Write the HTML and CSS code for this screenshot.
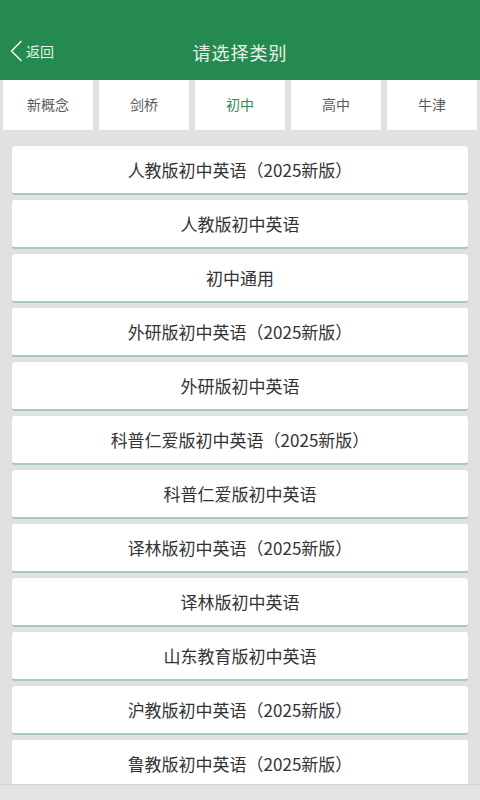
FILE: index.html
```html
<!DOCTYPE html>
<html lang="zh">
<head>
<meta charset="utf-8">
<link rel="stylesheet" href="styles.css">
</head>
<body>
<div class="app">
  <header class="topbar">
    <div class="back">
      <svg class="chev" width="14" height="22" viewBox="0 0 14 22"><path d="M12 1.5 L2.5 11 L12 20.5" fill="none" stroke="#e6f3ea" stroke-width="1.7" stroke-linecap="round" stroke-linejoin="round"/></svg>
      <span>返回</span>
    </div>
    <div class="title">请选择类别</div>
  </header>
  <nav class="tabs">
    <div class="tab">新概念</div>
    <div class="tab">剑桥</div>
    <div class="tab active">初中</div>
    <div class="tab">高中</div>
    <div class="tab">牛津</div>
  </nav>
  <main class="listwrap">
    <div class="list">
      <div class="item">人教版初中英语（2025新版）</div>
      <div class="item">人教版初中英语</div>
      <div class="item">初中通用</div>
      <div class="item">外研版初中英语（2025新版）</div>
      <div class="item">外研版初中英语</div>
      <div class="item">科普仁爱版初中英语（2025新版）</div>
      <div class="item">科普仁爱版初中英语</div>
      <div class="item">译林版初中英语（2025新版）</div>
      <div class="item">译林版初中英语</div>
      <div class="item">山东教育版初中英语</div>
      <div class="item">沪教版初中英语（2025新版）</div>
      <div class="item">鲁教版初中英语（2025新版）</div>
    </div>
  </main>
  <div class="below">冀教版初中</div>
</div>
</body>
</html>
```
FILE: styles.css
```css
* { box-sizing: border-box; }
html, body { margin: 0; padding: 0; }
body {
  width: 480px;
  height: 800px;
  overflow: hidden;
  background: #e1e1e1;
  font-family: "Noto Sans CJK SC", "Noto Sans", sans-serif;
}
.app {
  display: flex;
  flex-direction: column;
  height: 800px;
}
.topbar {
  height: 80px;
  flex: none;
  background: #258a4f;
  position: relative;
  display: flex;
  align-items: flex-end;
  justify-content: center;
  padding-bottom: 15px;
  color: #e4f2e8;
}
.back {
  position: absolute;
  left: 9px;
  bottom: 18px;
  display: flex;
  align-items: center;
  gap: 3px;
  font-size: 14px;
  line-height: 20px;
}
.chev { display: block; }
.title {
  font-size: 18px;
  line-height: 26px;
  letter-spacing: 1px;
}
.tabs {
  height: 50px;
  flex: none;
  display: grid;
  grid-template-columns: repeat(5, 1fr);
  gap: 6px;
  padding: 0 3px;
  background: #e1e1e1;
}
.tab {
  background: #fff;
  display: flex;
  align-items: center;
  justify-content: center;
  font-size: 14px;
  color: #5a5a5a;
  padding-bottom: 2px;
}
.tab.active { color: #2e8d55; }
.listwrap {
  height: 640px;
  flex: none;
  margin-top: 15px;
  overflow: hidden;
  padding: 0 11px;
  border-bottom: 1px solid #d2d2d2;
}
.list {
  display: flex;
  flex-direction: column;
  gap: 4px;
}
.item {
  height: 50px;
  flex: none;
  background: #fff;
  border: 1px solid #d6e6dc;
  border-bottom: 2px solid #aac9b6;
  border-radius: 4px;
  display: flex;
  align-items: center;
  justify-content: center;
  font-size: 17px;
  color: #333;
  padding-bottom: 1px;
}
.below {
  flex: 1;
  overflow: hidden;
  padding-left: 150px;
  padding-top: 11px;
  font-size: 16px;
  color: #333;
  line-height: 22px;
  background: #e4e4e4;
}
```
